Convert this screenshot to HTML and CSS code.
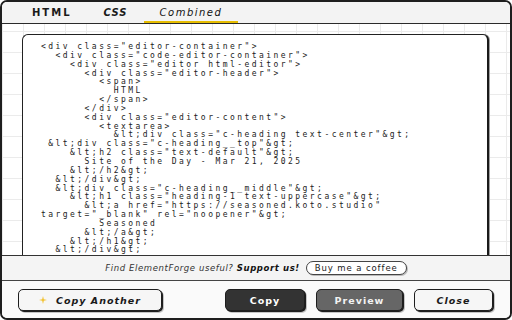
FILE: index.html
```html
<!DOCTYPE html>
<html>
<head>
<meta charset="utf-8">
<link rel="stylesheet" href="styles.css">
</head>
<body>
<div class="app">
  <div class="tabs">
    <div class="tab tab-html">HTML</div>
    <div class="tab tab-css">CSS</div>
    <div class="tab tab-combined active">Combined</div>
  </div>
  <div class="workspace">
    <div class="code-box">
<pre class="code">&lt;div class="editor-container"&gt;
  &lt;div class="code-editor-container"&gt;
    &lt;div class="editor html-editor"&gt;
      &lt;div class="editor-header"&gt;
        &lt;span&gt;
          HTML
        &lt;/span&gt;
      &lt;/div&gt;
      &lt;div class="editor-content"&gt;
        &lt;textarea&gt;
          &amp;lt;div class="c-heading text-center"&amp;gt;
 &amp;lt;div class="c-heading__top"&amp;gt;
    &amp;lt;h2 class="text-default"&amp;gt;
      Site of the Day - Mar 21, 2025
    &amp;lt;/h2&amp;gt;
  &amp;lt;/div&amp;gt;
  &amp;lt;div class="c-heading__middle"&amp;gt;
    &amp;lt;h1 class="heading-1 text-uppercase"&amp;gt;
      &amp;lt;a href="https://seasoned.koto.studio"
target="_blank" rel="noopener"&amp;gt;
        Seasoned
      &amp;lt;/a&amp;gt;
    &amp;lt;/h1&amp;gt;
  &amp;lt;/div&amp;gt;</pre>
    </div>
  </div>
  <div class="support">
    <span class="support-text">Find ElementForge useful? <b>Support us!</b></span>
    <span class="coffee">Buy me a coffee</span>
  </div>
  <div class="actions">
    <button class="btn btn-light btn-another">
      <svg class="spark" width="8" height="8" viewBox="0 0 8 8"><path d="M4 0 L4.8 3.2 L8 4 L4.8 4.8 L4 8 L3.2 4.8 L0 4 L3.2 3.2 Z" fill="#f2c12e"/></svg>
      Copy Another
    </button>
    <div class="right-actions">
      <button class="btn btn-dark btn-copy">Copy</button>
      <button class="btn btn-gray btn-preview">Preview</button>
      <button class="btn btn-light btn-close">Close</button>
    </div>
  </div>
</div>
</body>
</html>
```
FILE: styles.css
```css
html, body {
  margin: 0;
  padding: 0;
  background: #ffffff;
}
.app {
  width: 512px;
  height: 320px;
  box-sizing: border-box;
  border: 2px solid #1e1e1e;
  border-radius: 7px;
  overflow: hidden;
  display: flex;
  flex-direction: column;
  font-family: "DejaVu Sans", sans-serif;
  color: #222;
  background: #fafafa;
}
.tabs {
  height: 21px;
  flex: none;
  display: flex;
  padding-left: 14px;
  background: #f3f3f3;
  border-bottom: 1px solid #2a2a2a;
}
.tab {
  padding: 0 16px;
  font-size: 10px;
  line-height: 21px;
  letter-spacing: 1.6px;
  color: #1a1a1a;
  box-sizing: border-box;
}
.tab-html { font-weight: bold; letter-spacing: 2px; }
.tab-css { font-weight: bold; font-style: italic; letter-spacing: 1px; }
.tab-combined { font-style: italic; letter-spacing: 1.5px; color: #111; }
.tab.active { border-bottom: 2px solid #e6bd00; }
.workspace {
  flex: 1 1 auto;
  min-height: 0;
  overflow: hidden;
  padding: 10px 21px 0 20px;
  background-color: #ffffff;
  background-image:
    linear-gradient(to right, #ebebeb 1px, transparent 1px),
    linear-gradient(to bottom, #ebebeb 1px, transparent 1px);
  background-size: 21px 21px;
  background-position: 0 7px;
}
.code-box {
  background: #ffffff;
  border: 1px solid #222;
  border-right: 2px solid #1a1a1a;
  border-radius: 6px 6px 0 0;
  box-shadow: 1px 0 0 #a0a0a0;
  padding: 8px 0 30px 18px;
}
.code {
  margin: 0;
  font-family: "DejaVu Sans Mono", monospace;
  font-size: 8px;
  line-height: 8.85px;
  letter-spacing: 2.45px;
  color: #222;
  white-space: pre;
}
.support {
  flex: none;
  height: 24px;
  border-top: 1px solid #333;
  border-bottom: 1px solid #444;
  background: #f4f4f4;
  display: flex;
  align-items: center;
  justify-content: center;
  gap: 6px;
  font-size: 8.5px;
}
.support-text {
  font-style: italic;
  letter-spacing: 0.6px;
  color: #333;
}
.support-text b {
  color: #111;
}
.coffee {
  border: 1px solid #444;
  border-radius: 8px;
  background: #ffffff;
  padding: 1px 8px;
  letter-spacing: 0.9px;
  line-height: 10px;
  color: #222;
  box-shadow: 1px 1px 0 #bbb;
}
.actions {
  flex: none;
  height: 37px;
  box-sizing: border-box;
  display: flex;
  justify-content: space-between;
  align-items: flex-start;
  padding: 8px 17px 0 16px;
  background: #fafafa;
}
.right-actions {
  display: flex;
  gap: 11px;
}
.btn {
  height: 22px;
  box-sizing: border-box;
  border: 1px solid #1e1e1e;
  border-radius: 5px;
  font-family: "DejaVu Sans", sans-serif;
  font-weight: bold;
  font-size: 9.5px;
  letter-spacing: 1px;
  padding: 0;
  display: flex;
  align-items: center;
  justify-content: center;
  box-shadow: 1px 1px 0 #1e1e1e, 2px 2px 0 #c4c4c4;
  cursor: pointer;
}
.btn-light { background: #f6f6f6; color: #1a1a1a; }
.btn-dark { background: #333333; color: #ffffff; }
.btn-gray { background: #666666; color: #f2f2f2; }
.btn-another { width: 144px; gap: 9px; font-style: italic; }
.btn-copy { width: 80px; }
.btn-preview { width: 87px; }
.btn-close { width: 79px; font-style: italic; }
.spark { flex: none; }
```
